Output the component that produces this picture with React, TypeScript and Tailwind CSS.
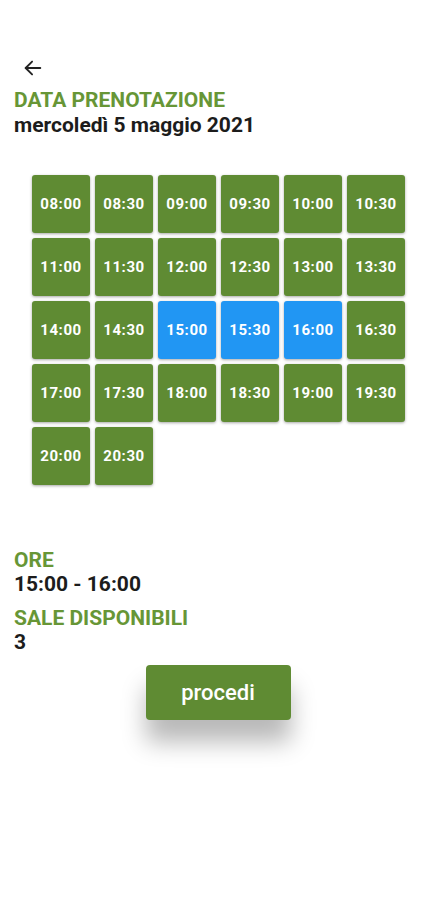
import React from "react";

const times = [
  "08:00","08:30","09:00","09:30","10:00","10:30",
  "11:00","11:30","12:00","12:30","13:00","13:30",
  "14:00","14:30","15:00","15:30","16:00","16:30",
  "17:00","17:30","18:00","18:30","19:00","19:30",
  "20:00","20:30",
];
const selected = new Set(["15:00","15:30","16:00"]);

export default function App() {
  return (
    <div className="w-[438px] h-[900px] bg-white" style={{ fontFamily: "Roboto, 'Noto Sans', sans-serif" }}>
      <div className="pt-[57px] pl-[22px] h-[79px]">
        <svg width="22" height="22" viewBox="0 0 24 24" fill="none" stroke="#222" strokeWidth="2" strokeLinecap="round" strokeLinejoin="round">
          <path d="M20 12H4" />
          <path d="M11 5l-7 7 7 7" />
        </svg>
      </div>
      <div className="pl-[14px] mt-[9px]">
        <div className="text-[21px] leading-[25px] font-bold text-[#679636]">DATA PRENOTAZIONE</div>
        <div className="text-[21px] leading-[24px] font-bold text-[#1c1c1c]">mercoledì 5 maggio 2021</div>
      </div>
      <div className="grid grid-cols-[repeat(6,58px)] gap-[5px] pl-[32px] mt-[38px]">
        {times.map((t) => (
          <div
            key={t}
            className={`h-[58px] rounded-[3px] flex items-center justify-center text-white text-[15px] tracking-[0.6px] font-bold shadow-[0_1px_3px_rgba(0,0,0,0.35)] ${selected.has(t) ? "bg-[#2196f3]" : "bg-[#5f8b33]"}`}
          >
            {t}
          </div>
        ))}
      </div>
      <div className="pl-[14px] mt-[63px]">
        <div className="text-[21px] leading-[24px] font-bold text-[#679636]">ORE</div>
        <div className="text-[21px] leading-[24px] font-bold text-[#1c1c1c]">15:00 - 16:00</div>
        <div className="text-[21px] leading-[24px] font-bold text-[#679636] mt-[10px]">SALE DISPONIBILI</div>
        <div className="text-[21px] leading-[24px] font-bold text-[#1c1c1c]">3</div>
      </div>
      <div className="flex justify-center mt-[11px] pr-[2px]">
        <button className="w-[145px] h-[55px] rounded-[4px] bg-[#5f8b33] text-white text-[22px] font-medium shadow-[0_22px_24px_rgba(0,0,0,0.28)]">
          procedi
        </button>
      </div>
    </div>
  );
}
